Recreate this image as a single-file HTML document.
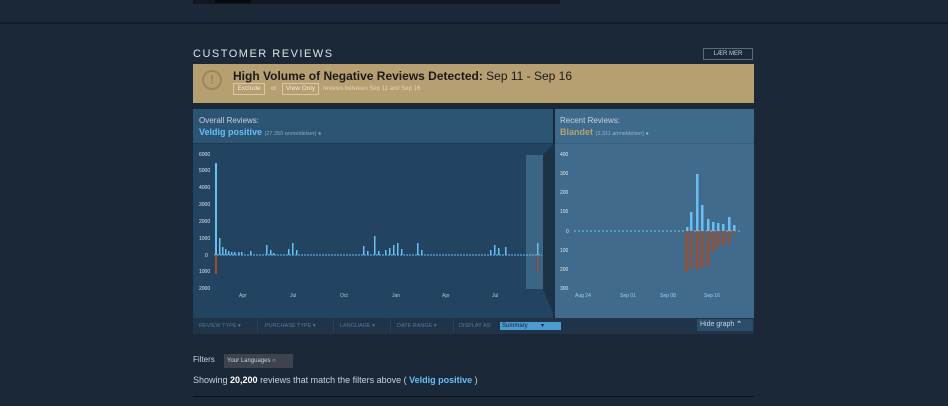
<!DOCTYPE html>
<html><head><meta charset="utf-8"><style>
body{margin:0;width:948px;height:406px;background:#1b2838;font-family:"Liberation Sans",sans-serif;position:relative;overflow:hidden}
.a{position:absolute}
.f{position:absolute;top:323px;font-size:5.5px;color:#4f7a9e;white-space:nowrap}
.d{position:absolute;top:319px;width:1px;height:14px;background:#2a4259}
</style></head><body>
<div class="a" style="left:193px;top:0;width:367px;height:4px;background:#101822"></div>
<div class="a" style="left:215px;top:0;width:36px;height:3px;background:#050a10"></div>
<div class="a" style="left:0;top:22px;width:948px;height:2px;background:#131d28"></div>
<div class="a" style="left:193px;top:48px;font-size:11px;letter-spacing:1.5px;color:#dfe3e6">CUSTOMER REVIEWS</div>
<div class="a" style="left:703px;top:48px;width:50px;height:12px;border:1px solid #5a6b7a;box-sizing:border-box;font-size:6px;color:#c6d4df;text-align:center;line-height:11px">LÆR MER</div>
<div class="a" style="left:193px;top:64px;width:561px;height:39px;background:#b69f71"></div>
<div class="a" style="left:202px;top:70px;width:20px;height:20px;border:2px solid #9c8758;border-radius:50%;box-sizing:border-box;color:#9c8758;font-weight:bold;font-size:13px;text-align:center;line-height:16px">!</div>
<div class="a" style="left:233px;top:69px;font-size:12px;color:#1b1b1b;white-space:nowrap"><b>High Volume of Negative Reviews Detected:</b> Sep 11 - Sep 16</div>
<div class="a" style="left:233px;top:83px;width:32px;height:12px;border:1px solid #d8c9a4;box-sizing:border-box;font-size:6.5px;color:#f2ead8;line-height:10px;text-align:center">Exclude</div>
<div class="a" style="left:271px;top:86px;font-size:6px;color:#e8dcc0">or</div>
<div class="a" style="left:282px;top:83px;width:37px;height:12px;border:1px solid #d8c9a4;box-sizing:border-box;font-size:6.5px;color:#f2ead8;line-height:10px;text-align:center">View Only</div>
<div class="a" style="left:323px;top:86px;font-size:6px;color:#e3d5b5;white-space:nowrap">reviews between Sep 11 and Sep 16</div>
<div class="a" style="left:193px;top:109px;width:360px;height:35px;background:#2c5574"></div>
<div class="a" style="left:193px;top:144px;width:360px;height:174px;background:#234461"></div>
<div class="a" style="left:555px;top:109px;width:199px;height:35px;background:#3e6a8c"></div>
<div class="a" style="left:555px;top:144px;width:199px;height:174px;background:#416b8d"></div>
<div class="a" style="left:193px;top:143px;width:360px;height:1px;background:#1d3a52"></div>
<div class="a" style="left:555px;top:143px;width:199px;height:1px;background:#35607f"></div>
<div class="a" style="left:199px;top:116px;font-size:8px;color:#c6d4df">Overall Reviews:</div>
<div class="a" style="left:199px;top:127px;font-size:9px;color:#66c0f4;font-weight:bold">Veldig positive <span style="font-size:5.5px;color:#8fa8bd;font-weight:normal">(27.350 anmeldelser) ●</span></div>
<div class="a" style="left:560px;top:116px;font-size:8px;color:#c6d4df">Recent Reviews:</div>
<div class="a" style="left:560px;top:127px;font-size:9px;color:#b9a074;font-weight:bold">Blandet <span style="font-size:5.5px;color:#9bb3c8;font-weight:normal">(2.311 anmeldelser) ●</span></div>
<div class="a" style="left:526px;top:155px;width:17px;height:134px;background:#3a6584"></div>
<svg class="a" style="left:0;top:0" width="948" height="406">
<polygon points="543,155 555,143 555,318 543,289" fill="#1b3247"/>
<g fill="#dfe8ef" font-size="5" font-family="Liberation Sans">
<text x="199" y="156">6000</text><text x="199" y="172">5000</text><text x="199" y="189">4000</text><text x="199" y="206">3000</text><text x="199" y="223">2000</text><text x="199" y="240">1000</text><text x="205" y="257">0</text><text x="199" y="273">1000</text><text x="199" y="290">2000</text>
<text x="239" y="297" fill="#9ccfe0">Apr</text><text x="290" y="297" fill="#9ccfe0">Jul</text><text x="340" y="297" fill="#9ccfe0">Oct</text><text x="392" y="297" fill="#9ccfe0">Jan</text><text x="442" y="297" fill="#9ccfe0">Apr</text><text x="492" y="297" fill="#9ccfe0">Jul</text>
<text x="560" y="156">400</text><text x="560" y="175">300</text><text x="560" y="194">200</text><text x="560" y="213">100</text><text x="566" y="233">0</text><text x="560" y="252">100</text><text x="560" y="271">200</text><text x="560" y="290">300</text>
<text x="575" y="297" fill="#9ccff0">Aug 24</text><text x="620" y="297" fill="#9ccff0">Sep 01</text><text x="660" y="297" fill="#9ccff0">Sep 08</text><text x="704" y="297" fill="#9ccff0">Sep 16</text>
</g>
<line x1="214" y1="255" x2="542" y2="255" stroke="#66c0f4" stroke-width="1" stroke-dasharray="2,1"/>
<g fill="#66c0f4">
<rect x="215" y="163" width="2" height="92"/><rect x="219" y="238" width="1.5" height="17"/><rect x="222" y="247" width="1.5" height="8"/><rect x="225" y="249" width="1.5" height="6"/><rect x="228" y="251" width="1.5" height="4"/><rect x="231" y="252" width="1.5" height="3"/><rect x="234" y="252" width="1.5" height="3"/><rect x="238" y="252" width="1.5" height="3"/><rect x="241" y="252" width="1.5" height="3"/><rect x="250" y="251" width="1.5" height="4"/>
<rect x="266" y="245" width="1.5" height="10"/><rect x="270" y="250" width="1.5" height="5"/><rect x="273" y="253" width="1.5" height="2"/>
<rect x="288" y="249" width="1.5" height="6"/><rect x="292" y="243" width="1.5" height="12"/><rect x="296" y="250" width="1.5" height="5"/>
<rect x="363" y="246" width="1.5" height="9"/><rect x="367" y="251" width="1.5" height="4"/><rect x="374" y="236" width="1.5" height="19"/><rect x="378" y="251" width="1.5" height="4"/><rect x="385" y="250" width="1.5" height="5"/><rect x="389" y="248" width="1.5" height="7"/><rect x="393" y="245" width="1.5" height="10"/><rect x="397" y="243" width="1.5" height="12"/><rect x="401" y="249" width="1.5" height="6"/><rect x="417" y="243" width="1.5" height="12"/><rect x="421" y="250" width="1.5" height="5"/>
<rect x="490" y="250" width="1.5" height="5"/><rect x="494" y="245" width="1.5" height="10"/><rect x="498" y="248" width="1.5" height="7"/><rect x="505" y="247" width="1.5" height="8"/><rect x="537" y="243" width="1.5" height="12"/>
</g>
<g fill="#a34c25"><rect x="215" y="255" width="2" height="19"/><rect x="537" y="255" width="1.5" height="16"/></g>
<line x1="574" y1="231" x2="740" y2="231" stroke="#66c0f4" stroke-width="1" stroke-dasharray="2,2"/>
<g fill="#66c0f4">
<rect x="686" y="227" width="2.5" height="4"/><rect x="690" y="212" width="2.5" height="19"/><rect x="696" y="174" width="2.5" height="57"/><rect x="701" y="205" width="2.5" height="26"/><rect x="707" y="219" width="2.5" height="12"/><rect x="712" y="222" width="2.5" height="9"/><rect x="717" y="223" width="2.5" height="8"/><rect x="722" y="224" width="2.5" height="7"/><rect x="728" y="217" width="2.5" height="14"/><rect x="733" y="225" width="2.5" height="6"/>
</g>
<g fill="#a34c25">
<rect x="685" y="231" width="2.5" height="41"/><rect x="690" y="231" width="2.5" height="37"/><rect x="696" y="231" width="2.5" height="39"/><rect x="701" y="231" width="2.5" height="37"/><rect x="707" y="231" width="2.5" height="35"/><rect x="712" y="231" width="2.5" height="20"/><rect x="717" y="231" width="2.5" height="16"/><rect x="722" y="231" width="2.5" height="14"/><rect x="728" y="231" width="2.5" height="12"/><rect x="733" y="231" width="2.5" height="3"/>
</g>
</svg>
<div class="a" style="left:193px;top:318px;width:561px;height:16px;background:#1f3449"></div>
<div class="f" style="left:199px">REVIEW TYPE ▾</div>
<div class="d" style="left:257px"></div>
<div class="f" style="left:265px">PURCHASE TYPE ▾</div>
<div class="d" style="left:333px"></div>
<div class="f" style="left:340px">LANGUAGE ▾</div>
<div class="d" style="left:390px"></div>
<div class="f" style="left:397px">DATE RANGE ▾</div>
<div class="d" style="left:453px"></div>
<div class="f" style="left:459px">DISPLAY AS:</div>
<div class="a" style="left:500px;top:322px;width:61px;height:8px;background:#4d9bd0;font-size:6px;color:#0e2030;line-height:8px;padding-left:2px;box-sizing:border-box">Summary &nbsp;&nbsp;&nbsp;&nbsp;&nbsp;&nbsp; ▾</div>
<div class="a" style="left:697px;top:319px;width:56px;height:12px;background:#2b4d6c;font-size:7px;color:#c6d4df;line-height:12px;padding-left:3px;box-sizing:border-box">Hide graph <b>⌃</b></div>
<div class="a" style="left:193px;top:355px;font-size:8px;color:#c6d4df">Filters</div>
<div class="a" style="left:224px;top:354px;width:69px;height:14px;background:#3d4450;font-size:6px;color:#c6d4df;line-height:14px;padding-left:3px;box-sizing:border-box">Your Languages ○</div>
<div class="a" style="left:193px;top:375px;font-size:9px;color:#c6d4df">Showing <b style="color:#fff">20,200</b> reviews that match the filters above ( <b style="color:#66c0f4">Veldig positive</b> )</div>
<div class="a" style="left:193px;top:396px;width:561px;height:1px;background:#0b1118"></div>
</body></html>
